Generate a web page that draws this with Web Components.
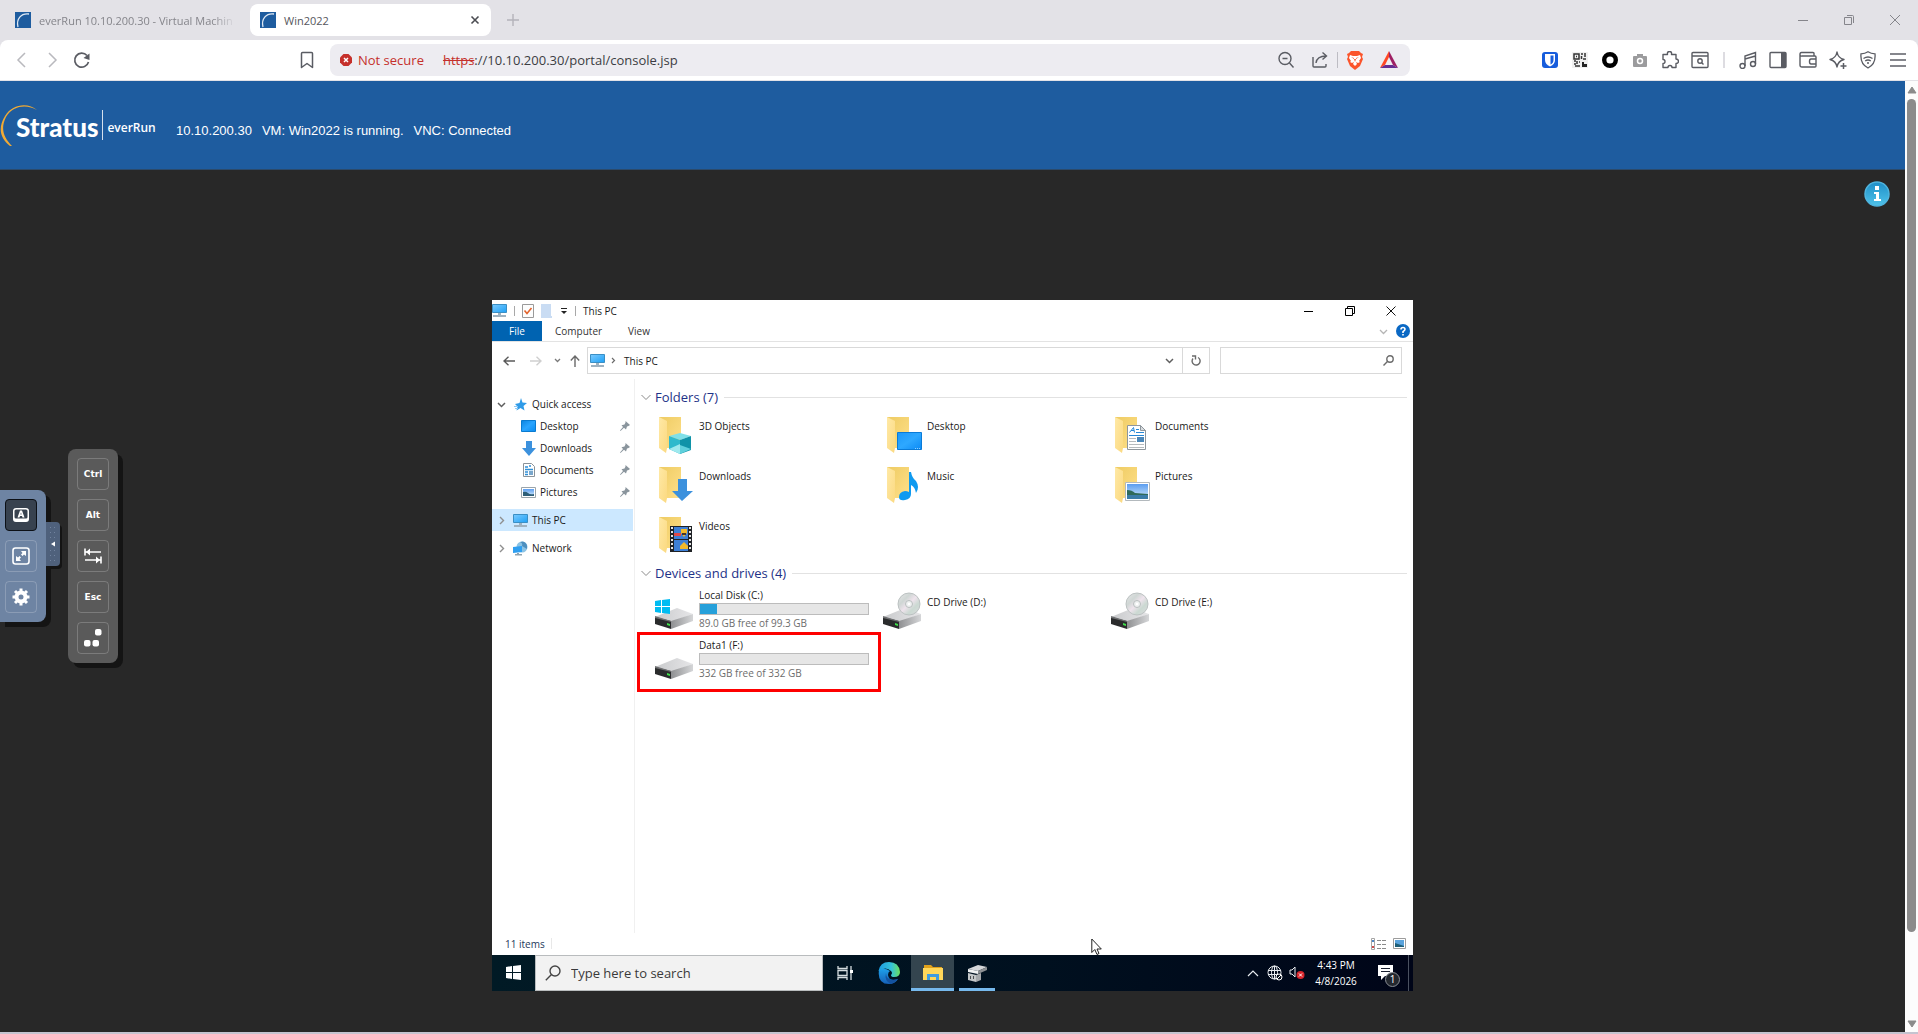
<!DOCTYPE html>
<html lang="en">
<head>
<meta charset="utf-8">
<title>Win2022</title>
<style>
  body {
    margin: 0;
    min-height: 100vh;
    display: flex;
    flex-direction: column;
    background: #282828;
    font-family: "Open Sans", "Noto Sans", sans-serif;
    font-size: 10px;
  }
  .viewport {
    flex: 1;
    display: flex;
    border-bottom: 2px solid #c5c4d0;
  }
  .page {
    flex: 1;
    display: flex;
    flex-direction: column;
    min-width: 0;
  }
</style>
</head>
<body>
<browser-chrome>
  <browser-tab slot="tabs" label="everRun 10.10.200.30 - Virtual Machin"></browser-tab>
  <browser-tab slot="tabs" label="Win2022" active></browser-tab>
</browser-chrome>
<div class="viewport">
  <div class="page">
    <console-header>
      <span>10.10.200.30</span>
      <span>VM: Win2022 is running.</span>
      <span>VNC: Connected</span>
    </console-header>
    <console-workspace>
      <remote-screen>
        <explorer-window>
          <nav-item slot="nav" icon="star" open>Quick access</nav-item>
          <nav-item slot="nav" icon="desktop" child>Desktop</nav-item>
          <nav-item slot="nav" icon="download" child>Downloads</nav-item>
          <nav-item slot="nav" icon="document" child>Documents</nav-item>
          <nav-item slot="nav" icon="picture" child>Pictures</nav-item>
          <nav-item slot="nav" icon="pc" selected spaced>This PC</nav-item>
          <nav-item slot="nav" icon="network" spaced>Network</nav-item>

          <item-group label="Folders (7)">
            <item-tile icon="folder3d">3D Objects</item-tile>
            <item-tile icon="folderDesktop">Desktop</item-tile>
            <item-tile icon="folderDocs">Documents</item-tile>
            <item-tile icon="folderDown">Downloads</item-tile>
            <item-tile icon="folderMusic">Music</item-tile>
            <item-tile icon="folderPics">Pictures</item-tile>
            <item-tile icon="folderVideo">Videos</item-tile>
          </item-group>
          <item-group label="Devices and drives (4)">
            <item-tile icon="driveWin" used="10" free="89.0 GB free of 99.3 GB">Local Disk (C:)</item-tile>
            <item-tile icon="driveCd">CD Drive (D:)</item-tile>
            <item-tile icon="driveCd">CD Drive (E:)</item-tile>
            <item-tile icon="drive" used="0" free="332 GB free of 332 GB" marked>Data1 (F:)</item-tile>
          </item-group>
        </explorer-window>
        <task-bar></task-bar>
      </remote-screen>
    </console-workspace>
  </div>
  <page-scrollbar></page-scrollbar>
</div>

<script>
// ---- icons: name -> [width, height, svg content] ----
const folder = `
  <linearGradient id="fb" x1="0" y1="0" x2="1" y2="1"><stop offset="0" stop-color="#eecb62"/><stop offset="1" stop-color="#ffe08a"/></linearGradient>
  <linearGradient id="ff" x1="0" y1="0" x2="1" y2="1"><stop offset="0" stop-color="#ffe9a6"/><stop offset="1" stop-color="#fbd980"/></linearGradient>
  <path fill="url(#fb)" d="M4 1h22v31H8z"/>
  <path fill="url(#ff)" d="M4 1l8 4v27l-1 5-7-5z"/>`;
const box = `
  <linearGradient id="dt" x1="0" y1="0" x2="1" y2="0"><stop offset="0" stop-color="#c9cacc"/><stop offset="1" stop-color="#e6e6e8"/></linearGradient>
  <linearGradient id="ds" x1="0" y1="0" x2="1" y2="0"><stop offset="0" stop-color="#8f9092"/><stop offset="1" stop-color="#d5d6d8"/></linearGradient>
  <path fill="url(#dt)" d="M0 25l22-9 16 6-22 8z"/>
  <path fill="url(#ds)" d="M16 29l22-7v7l-22 8z"/>
  <path fill="#2a2b2c" d="M0 25l16 4v8L0 32z"/>
  <path fill="#6d6e70" d="M0 24l16 5v1L0 26z"/>
  <path fill="#3fe04a" d="M12 31l3 1v2l-3-1z"/>`;
const monitor = `
  <linearGradient id="mo" x1="0" y1="0" x2="1" y2="1"><stop offset="0" stop-color="#7ccbff"/><stop offset="1" stop-color="#1ea0f5"/></linearGradient>
  <path fill="url(#mo)" stroke="#3b8fc4" d="M.5 1.5h14v8H.5z"/>
  <path fill="#9fb2c0" d="M6 10h3v2H6zM1 12h13v2H1z"/>`;
const sky = `
  <linearGradient id="sk" x1="0" y1="0" x2="0" y2="1"><stop offset="0" stop-color="#5b9df0"/><stop offset="1" stop-color="#d5ecfb"/></linearGradient>`;

const ICONS = {
  favicon: [16, 16, `<path fill="#1e5c9f" d="M0 0h16v16H0z"/><path fill="none" stroke="#dfe9f4" stroke-width="1.3" d="M14 2C6 1 1 7 3 15"/>`],
  close: [10, 10, `<path stroke="#4b4c52" stroke-width="1.6" d="M1.5 1.5l7 7m0-7l-7 7"/>`],
  plus: [12, 12, `<path stroke="#b4b3ba" stroke-width="1.4" d="M6 0v12M0 6h12"/>`],
  winMin: [12, 12, `<path stroke="#85858b" d="M1 6.5h10"/>`],
  winMax: [12, 12, `<path fill="none" stroke="#85858b" d="M1.500 3.500h7v7h-7zM4 1.500h5.500q1 0 1 1V9"/>`],
  winClose: [12, 12, `<path stroke="#85858b" d="M1 1l10 10M11 1L1 11"/>`],
  back: [12, 16, `<path fill="none" stroke="#b9b9be" stroke-width="1.5" d="M9 1L2 8l7 7"/>`],
  forward: [12, 16, `<path fill="none" stroke="#b9b9be" stroke-width="1.5" d="M3 1l7 7-7 7"/>`],
  reload: [18, 18, `<path fill="none" stroke="#5a5c63" stroke-width="1.7" d="M15.500 11A7 7 0 1 1 14 4.500"/><path fill="#5a5c63" d="M16.500 2.500V9l-6-2z"/>`],
  bookmark: [14, 18, `<path fill="none" stroke="#5a5c63" stroke-width="1.5" stroke-linejoin="round" d="M1.500 2.500q0-1 1-1h9q1 0 1 1v14L7 12.500l-5.500 4z"/>`],
  notSecure: [12, 12, `<path fill="#c5302b" d="M3.500 0h5L12 3.500v5L8.500 12h-5L0 8.500v-5z"/><path stroke="#fff" stroke-width="1.5" d="M4 4l4 4m0-4L4 8"/>`],
  zoomOut: [18, 18, `<g fill="none" stroke="#5a5c63" stroke-width="1.4"><circle cx="8" cy="7.5" r="6"/><path d="M12.500 12l4 4.500M5.500 7.500h5"/></g>`],
  share: [18, 18, `<path fill="none" stroke="#5a5c63" stroke-width="1.4" d="M2 6v9q0 1 1 1h11q1 0 1-1v-2M5 12q1-7 10-7M11.500 1.500L15.500 5l-4 3.500"/>`],
  brave: [18, 20, `<path fill="#fb542b" d="M5 1h8l2 2 2 1-1 3 1 2-3 7-5 4-5-4-3-7 1-2-1-3 2-1z"/><path fill="#fff" d="M4 5l3 1h4l3-1 1 3-2 3 1 1-2 1-2-1 1 2-2 2-2-2 1-2-2 1-2-1 1-1-2-3z"/><path fill="#fb542b" d="M5 7l3 1v1zM13 7l-3 1v1zM8 9h2l-1 3z"/>`],
  bat: [18, 18, `<path fill="#ff4724" d="M9 0L0 17l5-3 4-8z"/><path fill="#9e1f63" d="M9 0l9 17-5-3-4-8z"/><path fill="#662d91" d="M0 17h18l-5-3H5z"/>`],
  bitwarden: [16, 16, `<rect width="16" height="16" rx="3" fill="#175ddc"/><path fill="#fff" d="M3 2h10v6q0 4-5 6.500Q3 12 3 8z"/><path fill="#175ddc" d="M8.500 3.500h3V8q0 3-3 4.500z"/>`],
  qr: [16, 16, `<path fill="#f0f0f0" d="M0 0h16v16H0z"/><path fill="none" stroke="#333" stroke-width="1.5" d="M2 2h5v5H2zM4 4.500h1M9 2h2M13 1v4M9.500 4v3M11 7h3M2 9h2M5 9v3M2 12h2M3 14h3M7 10h1M7 13v2"/><path fill="#222" d="M10 10h2v2h3v3h-5z"/>`],
  ring: [16, 16, `<circle cx="8" cy="8" r="5.8" fill="#fff" stroke="#000" stroke-width="4.4"/>`],
  camera: [16, 16, `<path fill="#9b9b9d" d="M5 2h6v2h3q1 0 1 1v9q0 1-1 1H2q-1 0-1-1V5q0-1 1-1h3z"/><circle cx="8" cy="9" r="2.5" fill="#9b9b9d" stroke="#fff" stroke-width="1.5"/>`],
  puzzle: [18, 18, `<path fill="none" stroke="#5a5c63" stroke-width="1.4" stroke-linejoin="round" d="M2 3.500h4.500q-.5-3 2-3t2 3H15V8q2.500 0 2.500 2.200T15 12.500v4H11q0-2-2-2t-2 2H2v-4q2 0 2-2t-2-2z"/>`],
  searchTab: [18, 18, `<g fill="none" stroke="#5a5c63" stroke-width="1.4"><rect x="1" y="1.5" width="16" height="15" rx="1"/><path d="M1 5h16M10.500 11.500l2 2"/><circle cx="9" cy="10" r="2.2"/></g>`],
  music: [18, 18, `<g fill="none" stroke="#5a5c63" stroke-width="1.4"><circle cx="3.5" cy="15" r="2.5"/><circle cx="14" cy="13" r="2.5"/><path d="M6 15V5l10.500-3.500V13M6 8l10.500-3"/></g>`],
  panel: [18, 18, `<rect x="1" y="1.5" width="16" height="15" rx="1" fill="none" stroke="#5a5c63" stroke-width="1.4"/><path fill="#5a5c63" d="M12 2h5v14h-5z"/>`],
  wallet: [18, 18, `<g fill="none" stroke="#5a5c63" stroke-width="1.4"><path d="M15 5V2.500q0-1-1-1H2.500q-1.500 0-1.500 2T3 5h13q1 0 1 1v9q0 1-1 1H3q-2 0-2-2V3"/><path d="M17 8h-5q-1.500 0-1.500 2.500T12 13h5"/></g>`],
  sparkle: [18, 18, `<path fill="none" stroke="#5a5c63" stroke-width="1.4" stroke-linejoin="round" d="M8 1q1 6 7 7.500Q9 10 8 16 7 10 1 8.500 7 7 8 1z"/><path stroke="#5a5c63" stroke-width="1.5" d="M14.500 12v6M11.500 15h6"/>`],
  shield: [16, 18, `<g fill="none" stroke="#5a5c63" stroke-width="1.3"><path d="M8 .8q3 2 7 2Q16 13 8 17 0 13 1 2.800q4 0 7-2z"/><path d="M3.500 7.500q4.500-3 9 0M5.200 10q2.800-2 5.600 0"/></g><circle cx="8" cy="12" r="1" fill="#5a5c63"/>`],
  menu: [18, 16, `<path stroke="#85868c" stroke-width="2" d="M1 2h16M1 8h16M1 14h16"/>`],
  up: [10, 8, `<path fill="#8b8b8b" stroke="#8b8b8b" stroke-linejoin="round" d="M5 1l4 6H1z"/>`],
  down: [10, 8, `<path fill="#8b8b8b" stroke="#8b8b8b" stroke-linejoin="round" d="M5 7l4-6H1z"/>`],

  swoosh: [40, 44, `<path fill="#f0aa35" d="M37 7C28-1 12 1 5 13-3 26 1 36 10 43L12 43C4 35 0 26 6 14 13 2 27 1 37 7z"/>`],
  info: [26, 26, `<linearGradient id="in" x1="0" y1="0" x2="0" y2="1"><stop offset="0" stop-color="#1f8fc8"/><stop offset="1" stop-color="#4fc3ea"/></linearGradient><circle cx="13" cy="13" r="12" fill="url(#in)" stroke="#4fb4de" stroke-width="1.5"/><path fill="#fff" d="M11 5h4v4h-4zM10 11h5v7h2v2h-7v-2h2v-5h-2z"/>`],
  vncA: [16, 16, `<path fill="#fff" fill-rule="evenodd" d="M3 1h10q3 0 3 3v8q0 3-3 3H3q-3 0-3-3V4q0-3 3-3zm0 1.500Q1.500 2.500 1.500 4v6q0 1.500 1.500 1.500h10q1.500 0 1.500-1.500V4q0-1.500-1.500-1.500zM7 3.500h2l2.500 7h-2L9 9H7l-.5 1.500h-2zM8 5.500L7.400 7.500h1.200z"/>`],
  vncFull: [18, 18, `<rect x="1" y="1" width="16" height="16" rx="2.5" fill="none" stroke="#fff" stroke-width="1.6"/><path fill="#fff" d="M9 4h5v5l-2-1.500-1.500 1.500L9 7.500 10.500 6zM4 9l2 1.500L7.500 9 9 10.500 7.500 12 9 14H4z"/>`],
  gear: [18, 18, `<circle cx="9" cy="9" r="4.5" fill="none" stroke="#fff" stroke-width="4"/><path stroke="#fff" stroke-width="3" d="M9 .5v3M9 14.500v3M.5 9h3M14.500 9h3M3 3l2 2M13 13l2 2M3 15l2-2M13 5l2-2"/>`],
  tabKey: [18, 16, `<path stroke="#fff" stroke-width="1.6" d="M1 .5v7M1 4h16M17 8.500v7M1 12h16"/><path fill="#fff" d="M2 4l4-3.500v7zM16 12l-4-3.500v7z"/>`],
  dots: [18, 18, `<g fill="#fff"><rect x="11" width="6.5" height="6.5" rx="2"/><rect y="11" width="6.5" height="6.5" rx="2"/><rect x="8.5" y="11" width="6.5" height="6.5" rx="2"/></g>`],
  grip: [8, 36, `<g fill="#71839f"><path d="M1 1h1v1H1zM5 1h1v1H5zM1 6h1v1H1zM5 6h1v1H5zM1 11h1v1H1zM5 11h1v1H5zM1 24h1v1H1zM5 24h1v1H5zM1 29h1v1H1zM5 29h1v1H5zM1 34h1v1H1zM5 34h1v1H5z"/></g><path fill="#fff" d="M2 18l4-2.500v5z"/>`],

  pc: [15, 15, monitor],
  props: [12, 15, `<path fill="#fdfdfd" stroke="#9a9a9a" d="M.5 1.500h11v13H.5z"/><path fill="none" stroke="#e2642d" stroke-width="1.6" d="M2.500 7.500l2.500 3 4.500-5.500"/>`],
  newFolder: [12, 14, `<path fill="#c9dcf3" d="M0 0h10v12h1v2H0z"/>`],
  custom: [8, 8, `<path stroke="#222" d="M1 1.500h6"/><path fill="#222" d="M1 4h6L4 7z"/>`],
  exMin: [10, 10, `<path stroke="#000" d="M0 5.500h9"/>`],
  exMax: [10, 10, `<path fill="none" stroke="#000" d="M.5 2.500h7v7h-7zM2.500 2V.5h7v7H8"/>`],
  exClose: [10, 10, `<path stroke="#111" d="M.5.5l9 9m0-9l-9 9"/>`],
  help: [14, 14, `<circle cx="7" cy="7" r="7" fill="#0a68c4"/><path fill="none" stroke="#fff" stroke-width="1.6" d="M5 5.500Q5 3.500 7 3.500t2 1.700Q9 6.200 7 7.700V9M7 10v1.600"/>`],
  chevDown: [9, 9, `<path fill="none" stroke="#5f5f5f" stroke-width="1.5" d="M1 3l3.500 3.500L8 3"/>`],
  chevSoft: [9, 9, `<path fill="none" stroke="#b5b5b5" stroke-width="1.3" d="M1 3l3.500 3.500L8 3"/>`],
  chevWide: [10, 9, `<path fill="none" stroke="#8a8a8a" d="M.5 2L5 6.500 9.500 2"/>`],
  chevSmall: [7, 7, `<path fill="none" stroke="#7a7a7a" stroke-width="1.3" d="M1 2l2.500 2.500L6 2"/>`],
  chevRight: [9, 9, `<path fill="none" stroke="#8f8f8f" stroke-width="1.4" d="M3 1l3.500 3.500L3 8"/>`],
  crumb: [7, 7, `<path fill="none" stroke="#6b6b6b" stroke-width="1.2" d="M2 1l2.500 2.500L2 6"/>`],
  exBack: [12, 10, `<path fill="none" stroke="#5a5a5a" stroke-width="1.4" d="M12 5H1M5.500.8L1 5l4.500 4.200"/>`],
  exFwd: [12, 10, `<path fill="none" stroke="#cfcfcf" stroke-width="1.4" d="M0 5h11M6.500.8L11 5 6.500 9.200"/>`],
  exUp: [10, 12, `<path fill="none" stroke="#6a6a6a" stroke-width="1.4" d="M5 12V1M.8 5.500L5 1l4.200 4.500"/>`],
  exReload: [10, 11, `<path fill="none" stroke="#6b6b6b" stroke-width="1.4" d="M7 2.500A4 4 0 1 1 2 3.500M1 1h3.500v3.500"/>`],
  exSearch: [11, 11, `<g fill="none" stroke="#6b6b6b" stroke-width="1.4"><circle cx="7" cy="4" r="3.2"/><path d="M4.700 6.300L.5 10.500"/></g>`],
  star: [13, 13, `<path fill="#2f9be8" d="M7 0l1.500 4.500L13 5 9.500 8l1 4.500L6.500 10l-4 2.500 1-4L1 6l4.500-1z"/><path stroke="#8fc9f5" d="M0 8.500h4M1 10.500h3"/>`],
  desktop: [15, 12, `<linearGradient id="de" x1="0" y1="0" x2="1" y2="1"><stop offset="0" stop-color="#0a84e0"/><stop offset=".5" stop-color="#2aa5ff"/><stop offset="1" stop-color="#0a8cf0"/></linearGradient><path fill="url(#de)" stroke="#0a7bd0" d="M.5.5h14v11H.5z"/>`],
  download: [14, 15, `<path fill="#3c91dd" d="M4 0h6v7h4l-7 8-7-8h4z"/>`],
  document: [12, 14, `<path fill="#fff" stroke="#8a9299" d="M.5.5h8l3 3v10H.5z"/><path stroke="#2f8fd6" stroke-width="1.4" d="M2 4h3M6 3h2M2 6.500h8M2 9h3M2 11.500h3"/><path fill="#7aa7cc" d="M6 8h4v4H6z"/>`],
  picture: [15, 11, `${sky}<path fill="#fff" stroke="#9aa4ab" d="M.5.5h14v10H.5z"/><path fill="url(#sk)" d="M2 2h11v7H2z"/><path fill="#2f5f78" d="M2 5q3-1 5 1t6 1v2H2z"/>`],
  network: [15, 15, `<circle cx="9" cy="6" r="5.5" fill="#8cc3e4"/><path fill="#4d8fbf" d="M7 1q3 1 2 4l5 3q1-6-4-7.500z"/><path fill="#2f9ff0" d="M0 6l9-1v6l-9 1z"/><path fill="#8fa3b0" d="M4 12h2v1h3v1.500H2V13h2z"/>`],
  pin: [10, 10, `<path fill="#8a959d" d="M5.500 0L10 4 8.500 5 7 5.500 6 8.500 4 6.800.5 10 0 9.500 3 6 1.500 4.200 4.500 3.500 5.500 1.500z"/>`],
  folder3d: [40, 40, `${folder}<path fill="#7fe0e8" d="M14 20l11-3 11 3-11 4z"/><path fill="#2fb9cc" d="M14 20l11 4v14l-11-5z"/><path fill="#9fe9ee" d="M14 33l11-5v10z"/><path fill="#0f93a8" d="M36 20l-11 4v14l11-4z"/><path fill="#5fd0dc" d="M36 33l-11-4v9z"/>`],
  folderDesktop: [40, 40, `${folder}<linearGradient id="g" x1="0" y1="0" x2="1" y2="1"><stop offset="0" stop-color="#1b97fa"/><stop offset=".5" stop-color="#2ea8ff"/><stop offset="1" stop-color="#0b8af5"/></linearGradient><path fill="url(#g)" stroke="#0a7bd8" d="M14.500 16.500h24v17h-24z"/><path stroke="#8fd0ff" d="M32 32.500h5" stroke-dasharray="1 1"/>`],
  folderDocs: [40, 40, `${folder}<path fill="#fff" stroke="#8e969c" d="M16.500 9.500h13l5 5v19h-18z"/><path fill="#d8dcdf" stroke="#8e969c" d="M29.500 9.500v5h5z"/><path fill="none" stroke="#2788d6" d="M18.500 16.500l4-5 1 5M20 14.500h3M25 13.500h3M25 16.500h8M18 19.500h15"/><path stroke="#b5babd" d="M18 22.500h7M18 25.500h7M18 28.500h15M18 31.500h15"/><path fill="#4a86b8" d="M26 21h7v5h-7z"/>`],
  folderDown: [40, 40, `${folder}<path fill="#3c91dd" d="M23 13h9v12h6L27 35 17 25h6z"/>`],
  folderMusic: [40, 40, `${folder}<path fill="#0f9af0" d="M26 6h2q1 6 5 9 4 6 0 12-1-6-5-8v9q0 5-6 6t-6-3q0-5 6-6 2 0 4 1z"/>`],
  folderPics: [40, 40, `${folder}${sky}<path fill="#fff" stroke="#b3b9bd" d="M14.500 16.500h24v18h-24z"/><path fill="url(#sk)" d="M16 18h21v15H16z"/><path fill="#2f6a5a" d="M16 24q5 0 8 3l13 1v2H16z"/><path fill="#3a7ca8" d="M16 29h21v4H16z"/>`],
  folderVideo: [40, 40, `${folder}<path fill="#1f2226" d="M15 10h22v26H15z"/><path stroke="#e6e6e6" stroke-width="2" stroke-dasharray="2 2" d="M17 11v24M35 11v24"/><path fill="#3d7fd6" d="M19 11h14v12H19zM19 24h14v11H19z"/><path fill="#e04848" d="M19 17h7v3h-7z"/><path fill="#f2b92b" d="M26 13h6v4l-3 4-3-4zM25 30l4-4 4 4v3h-8z"/><path fill="#46352a" d="M27 17h4v2h-4z"/>`],
  drive: [40, 40, box],
  driveWin: [40, 40, `${box}<path fill="#00bcf2" d="M0 9l6-1v6H0zM7 8l8-1v7H7zM0 15h6v6l-6-1zM7 15h8v7l-8-1z"/>`],
  driveCd: [40, 40, `${box}<linearGradient id="cd" x1="0" y1="0" x2="1" y2="1"><stop offset="0" stop-color="#e9e9e9"/><stop offset=".3" stop-color="#cfd6d4"/><stop offset=".5" stop-color="#eee3ec"/><stop offset=".7" stop-color="#cbd9d2"/><stop offset="1" stop-color="#dcdcde"/></linearGradient><circle cx="26" cy="12" r="11" fill="url(#cd)" stroke="#bcc2c2"/><circle cx="26" cy="12" r="3.5" fill="#eef0f0" stroke="#b9bfbf"/><circle cx="26" cy="12" r="1.3" fill="#fff"/>`],
  viewList: [16, 12, `<path fill="none" stroke="#a5a5a5" d="M.5.5h3v11h-3z"/><path fill="#4d86c6" d="M1 2h2v2H1z"/><path fill="#d04a4a" d="M1 8h2v2H1z"/><path stroke="#8a8a8a" stroke-dasharray="4 1" d="M6 2.500h9M6 6.500h9M6 10.500h9"/>`],
  viewTiles: [13, 11, `<path fill="#fff" stroke="#9c9c9c" d="M.5.5h12v10H.5z"/><path fill="#5aa3dc" d="M2 2h9v7H2z"/><path fill="#1f5f78" d="M2 5l9 3v1H2z"/>`],

  windows: [15, 15, `<path fill="#fff" d="M0 2l6-1v6H0zM7 1l8-1v7H7zM0 8h6v6l-6-1zM7 8h8v7l-8-1z"/>`],
  taskSearch: [16, 16, `<g fill="none" stroke="#444" stroke-width="1.4"><circle cx="10" cy="6" r="5"/><path d="M6.500 9.500L.8 15.200"/></g>`],
  taskView: [16, 14, `<g fill="none" stroke="#d6dde0" stroke-width="1.3"><path d="M1 0v2.500h9V0M1 14v-2.500h9V14M1 4.500h9v5H1zM14 0v14"/></g><path fill="#fff" d="M13 4h3v3h-3z"/>`],
  edge: [22, 22, `<linearGradient id="e1" x1="0" y1="0" x2="1" y2="0"><stop offset="0" stop-color="#1b9de2"/><stop offset=".6" stop-color="#35c1d8"/><stop offset="1" stop-color="#6be05a"/></linearGradient><linearGradient id="e2" x1="0" y1="0" x2="0" y2="1"><stop offset="0" stop-color="#1ea0ea"/><stop offset="1" stop-color="#1560b8"/></linearGradient><path fill="url(#e2)" d="M1 8Q-1 22 11 22q6 0 9-5-9 3-10-4 0-3 2-4Q6 5 1 8z"/><path fill="url(#e1)" d="M.5 9Q2 0 11 0q10 0 11 10 0 5-6 5-3 0-3-2 2-2 0-4Q8 4 .5 9z"/><path fill="#14529f" d="M8 11q0 9 12 6-3 4-7 5-7-3-5-11z"/>`],
  explorer: [20, 18, `<path fill="#e0a11b" d="M1 1h7l2 2h9v4H1z"/><path fill="#ffd75a" d="M0 4h20v12H0z"/><path fill="#3f9ce0" d="M4 16v-6h12v6h-3v-3H7v3z"/>`],
  server: [20, 18, `<path fill="#d5d7d9" d="M1 5l10-4 9 2-9 4z"/><path fill="#8d9093" d="M11 7l9-4v3l-9 4z"/><path fill="#f0f1f2" d="M1 5l10 2v3L1 8z"/><path fill="#c3c6c8" d="M1 9l8 2v7l-8-2z"/><path fill="#a5a8ab" d="M9 11l5-2v7l-5 2z"/><path fill="#4b4e51" d="M3 12h1v3H3zM6 12h1v3H6z"/>`],
  trayUp: [12, 8, `<path fill="none" stroke="#e8ecf0" stroke-width="1.2" d="M1 7l5-5 5 5"/>`],
  globe: [16, 16, `<g fill="none" stroke="#e8ecf0"><circle cx="7.5" cy="7.5" r="6.5"/><ellipse cx="7.5" cy="7.5" rx="3" ry="6.5"/><path d="M1 5.500h13M1 9.500h13M7.500 1v13"/></g><circle cx="12" cy="12" r="3" fill="#050d1b" stroke="#fff"/><path stroke="#fff" d="M10 14l4-4"/>`],
  mute: [16, 14, `<path fill="none" stroke="#e8ecf0" d="M1 4h2l3-3v10L3 8H1z"/><circle cx="11.5" cy="9" r="4" fill="#d9262c"/><path stroke="#fff" d="M10 7.500l3 3m0-3l-3 3"/>`],
  notify: [16, 15, `<path fill="#fff" d="M0 0h15v11H7l-4 4v-4H0z"/><path stroke="#1a2030" d="M3 3.500h9M3 6.500h9"/>`],
  cursor: [12, 18, `<path fill="#fff" stroke="#222" d="M.8 1v13.500l3-3 2.200 5 2-1-2-4.500h4.300z"/>`]
};

class UiIcon extends HTMLElement {
  connectedCallback() {
    if (this.shadowRoot) return;
    const [w, h, body] = ICONS[this.getAttribute('name')];
    this.attachShadow({ mode: 'open' }).innerHTML = `
      <style>
        :host { display: block; flex: none; }
        svg { display: block; }
      </style>
      <svg width="${w}" height="${h}" viewBox="0 0 ${w} ${h}" aria-hidden="true">${body}</svg>`;
  }
}
customElements.define('ui-icon', UiIcon);

// shared reset for the buttons inside every shadow root
const RESET = `
  * { box-sizing: border-box; }
  button, input {
    margin: 0; padding: 0; border: 0; background: none;
    font: inherit; color: inherit; outline: none;
  }
  button { display: flex; align-items: center; justify-content: center; flex: none; }
`;

function define(name, render) {
  customElements.define(name, class extends HTMLElement {
    connectedCallback() {
      if (this.shadowRoot) return;
      this.attachShadow({ mode: 'open' }).innerHTML = render(this);
    }
  });
}

const iconButton = (icon, label) =>
  `<button type="button" aria-label="${label}"><ui-icon name="${icon}"></ui-icon></button>`;

define('browser-tab', el => `
  <style>
    ${RESET}
    :host {
      display: flex; align-items: center; gap: 8px;
      width: 241px; height: 32px; padding: 0 10px; box-sizing: border-box;
      border-radius: 8px; font-size: 11px; color: #85858b;
    }
    :host([active]) { background: #fff; color: #55565c; }
    span { flex: 1; white-space: nowrap; }
    :host(:not([active])) span {
      -webkit-mask-image: linear-gradient(to right, #000 88%, transparent);
    }
    button { width: 12px; height: 20px; }
  </style>
  <ui-icon name="favicon"></ui-icon>
  <span>${el.getAttribute('label')}</span>
  ${el.hasAttribute('active') ? iconButton('close', 'Close tab') : ''}
`);

define('browser-chrome', () => `
  <style>
    ${RESET}
    :host { display: block; background: #e3e2e7; border-bottom: 1px solid #e3e2e7; }
    .tabs { display: flex; align-items: center; height: 40px; padding-left: 5px; gap: 4px; }
    .tabs > button { width: 36px; height: 32px; }
    .controls { margin-left: auto; display: flex; }
    .controls button { width: 46px; height: 32px; }
    .bar {
      display: flex; align-items: center; height: 40px; padding: 0 5px 0 7px;
      background: #fff; border-radius: 8px 8px 0 0;
    }
    .bar > button { width: 30px; height: 32px; }
    .bookmark { width: 233px; padding-right: 16px; display: flex; justify-content: flex-end; }
    .url {
      flex: 1; max-width: 1080px; height: 32px; padding: 0 4px 0 10px; display: flex; align-items: center;
      background: #edecf1; border-radius: 8px; font-size: 13px; color: #3c3d43;
    }
    .warn { color: #c5302b; margin: 0 19px 0 6px; }
    s { color: #c5302b; }
    input { flex: 1; min-width: 0; height: 24px; }
    .url button { height: 32px; width: 34px; }
    .url i { width: 1px; height: 16px; background: #bdbcc3; }
    .extensions { margin-left: auto; display: flex; align-items: center; }
    .extensions button { width: 30px; height: 32px; }
    .extensions i { width: 2px; height: 16px; margin: 0 8px; background: #dddce1; }
  </style>
  <div class="tabs">
    <slot name="tabs"></slot>
    ${iconButton('plus', 'New tab')}
    <div class="controls">
      ${iconButton('winMin', 'Minimize')}
      ${iconButton('winMax', 'Restore')}
      ${iconButton('winClose', 'Close')}
    </div>
  </div>
  <div class="bar">
    ${iconButton('back', 'Back')}
    ${iconButton('forward', 'Forward')}
    ${iconButton('reload', 'Reload')}
    <div class="bookmark">${iconButton('bookmark', 'Bookmark')}</div>
    <div class="url">
      <ui-icon name="notSecure"></ui-icon>
      <span class="warn">Not secure</span>
      <s>https</s><input aria-label="Address" value="://10.10.200.30/portal/console.jsp">
      ${iconButton('zoomOut', 'Zoom')}
      ${iconButton('share', 'Share')}
      <i></i>
      ${iconButton('brave', 'Shields')}
      ${iconButton('bat', 'Rewards')}
    </div>
    <div class="extensions">
      ${iconButton('bitwarden', 'Bitwarden')}
      ${iconButton('qr', 'QR code')}
      ${iconButton('ring', 'Recorder')}
      ${iconButton('camera', 'Screenshot')}
      ${iconButton('puzzle', 'Extensions')}
      ${iconButton('searchTab', 'Search tabs')}
      <i></i>
      ${iconButton('music', 'Media')}
      ${iconButton('panel', 'Side panel')}
      ${iconButton('wallet', 'Wallet')}
      ${iconButton('sparkle', 'Leo')}
      ${iconButton('shield', 'VPN')}
      ${iconButton('menu', 'Menu')}
    </div>
  </div>
`);

define('page-scrollbar', () => `
  <style>
    ${RESET}
    :host {
      display: flex; flex-direction: column; align-items: center; gap: 3px;
      width: 13px; padding: 2px 0; box-sizing: border-box; background: #fcfcfc;
    }
    button { width: 13px; height: 13px; }
    .track { flex: 1; width: 9px; }
    .thumb { height: 91%; border-radius: 5px; background: #8b8b8b; }
  </style>
  ${iconButton('up', 'Scroll up')}
  <div class="track"><div class="thumb"></div></div>
  ${iconButton('down', 'Scroll down')}
`);

define('console-header', () => `
  <style>
    :host {
      display: flex; align-items: center; height: 89px;
      background: #1e5c9f; color: #fff; border-bottom: 1px solid #2b4a6b; box-sizing: border-box;
    }
    .logo { display: flex; align-items: center; width: 176px; }
    .swoosh { margin-right: -24px; }
    b { padding-top: 4px; font: 900 26px/30px Lato, sans-serif; }
    .product {
      margin: 0 0 0 4px; padding: 6px 0 0 4px; border-left: 1px solid #d5e0ec;
      font: 600 12px/24px "Open Sans", sans-serif;
    }
    .status { display: flex; gap: 10px; padding-top: 11px; font: 13px/16px "Liberation Sans", Arial, sans-serif; }
  </style>
  <div class="logo">
    <ui-icon class="swoosh" name="swoosh"></ui-icon>
    <b>Stratus</b><span class="product">everRun</span>
  </div>
  <div class="status"><slot></slot></div>
`);

define('key-button', el => `
  <style>
    ${RESET}
    :host { display: block; }
    button {
      width: 32px; height: 32px; border: 1px solid rgba(255, 255, 255, .2); border-radius: 4px;
      color: #fff; font: bold 9px/12px "DejaVu Sans", sans-serif;
    }
    :host([pressed]) button { background: #38424f; border-color: #0c1016; }
  </style>
  <button type="button" aria-label="${el.getAttribute('label')}"><slot></slot></button>
`);

define('control-bar', () => `
  <style>
    ${RESET}
    :host { display: flex; align-items: center; }
    .panel, .keys {
      display: flex; flex-direction: column; gap: 9px; padding: 9px;
      box-shadow: 5px 5px 0 #141414;
    }
    .panel { padding-left: 5px; background: #6e84a3; border-radius: 0 8px 8px 0; }
    .handle {
      z-index: 1; align-self: flex-start; margin-top: 73px;
      width: 14px; height: 44px; background: #4f617c; border-radius: 0 4px 4px 0; box-shadow: 2px 3px 0 #141414;
    }
    .keys { margin-left: 8px; background: #5a5a5a; border-radius: 8px; }
  </style>
  <div class="panel">
    <key-button label="Extra keys" pressed><ui-icon name="vncA"></ui-icon></key-button>
    <key-button label="Full screen"><ui-icon name="vncFull"></ui-icon></key-button>
    <key-button label="Settings"><ui-icon name="gear"></ui-icon></key-button>
  </div>
  <button class="handle" type="button" aria-label="Hide bar"><ui-icon name="grip"></ui-icon></button>
  <div class="keys">
    <key-button label="Ctrl">Ctrl</key-button>
    <key-button label="Alt">Alt</key-button>
    <key-button label="Tab"><ui-icon name="tabKey"></ui-icon></key-button>
    <key-button label="Esc">Esc</key-button>
    <key-button label="Ctrl Alt Del"><ui-icon name="dots"></ui-icon></key-button>
  </div>
`);

define('console-workspace', () => `
  <style>
    ${RESET}
    :host { flex: 1; display: block; position: relative; padding: 130px 0 39px; background: #282828; }
    control-bar { position: absolute; left: 0; top: 279px; }
    .info { position: absolute; right: 15px; top: 11px; }
  </style>
  <slot></slot>
  <control-bar></control-bar>
  <button class="info" type="button" aria-label="Info"><ui-icon name="info"></ui-icon></button>
`);

define('remote-screen', () => `
  <style>
    :host {
      position: relative; display: flex; flex-direction: column;
      width: 100%; max-width: 921px; aspect-ratio: 4 / 3; margin: 0 auto; background: #fff;
    }
    .cursor { position: absolute; left: 599px; top: 638px; }
  </style>
  <slot></slot>
  <ui-icon class="cursor" name="cursor"></ui-icon>
`);

define('explorer-window', () => `
  <style>
    ${RESET}
    :host { flex: 1; display: flex; flex-direction: column; color: #1a1a1a; background: #fff; }
    .title, .tabs, .nav, .address, .search, .status { display: flex; align-items: center; }
    .title { height: 21px; gap: 7px; }
    .title i { width: 1px; height: 10px; background: #a8a8a8; }
    .window { display: flex; margin-left: auto; padding-right: 2px; }
    .window button { width: 41px; height: 20px; }
    .tabs { height: 21px; border-bottom: 1px solid #e3e3e3; padding-right: 3px; }
    .tabs button { height: 20px; color: #333; }
    .tabs .file { width: 50px; background: #0063b1; color: #fff; }
    .tabs .tab { padding: 0 13px; }
    .tabs .expand { margin-left: auto; width: 25px; }
    .nav { height: 37px; padding: 0 11px; }
    .nav > button { width: 12px; height: 20px; }
    .nav .b2 { margin-left: 15px; }
    .nav .b3 { margin-left: 9px; }
    .nav .b4 { margin-left: 6px; margin-right: 6px; }
    .address { flex: 1; height: 27px; border: 1px solid #d9d9d9; padding-left: 2px; gap: 5px; }
    .address .crumb { padding: 0 2px; height: 25px; }
    .address .drop { margin-left: auto; width: 26px; height: 25px; margin-right: -5px; }
    .address .refresh { width: 27px; height: 25px; border-left: 1px solid #d9d9d9; }
    .search { width: 182px; height: 27px; margin-left: 10px; border: 1px solid #d9d9d9; padding-right: 7px; }
    .search input { flex: 1; min-width: 0; }
    .body { flex: 1; display: grid; grid-template-columns: 143px 1fr; }
    .side { padding-top: 14px; border-right: 1px solid #f0f0f0; }
    .main { padding: 6px 6px 0; }
    .status { height: 22px; padding: 0 7px 0 13px; gap: 6px; color: #1e395b; }
    .status i { width: 1px; height: 11px; background: #e8e8e8; }
    .status .first { margin-left: auto; }
  </style>
  <div class="title">
    <ui-icon name="pc"></ui-icon><i></i>
    <ui-icon name="props"></ui-icon>
    <ui-icon name="newFolder"></ui-icon>
    <ui-icon name="custom"></ui-icon><i></i>
    <span>This PC</span>
    <div class="window">
      ${iconButton('exMin', 'Minimize')}
      ${iconButton('exMax', 'Restore')}
      ${iconButton('exClose', 'Close')}
    </div>
  </div>
  <div class="tabs">
    <button class="file" type="button">File</button>
    <button class="tab" type="button">Computer</button>
    <button class="tab" type="button">View</button>
    <button class="expand" type="button" aria-label="Expand ribbon"><ui-icon name="chevSoft"></ui-icon></button>
    ${iconButton('help', 'Help')}
  </div>
  <div class="nav">
    <button type="button" aria-label="Back"><ui-icon name="exBack"></ui-icon></button>
    <button class="b2" type="button" aria-label="Forward"><ui-icon name="exFwd"></ui-icon></button>
    <button class="b3" type="button" aria-label="Recent"><ui-icon name="chevSmall"></ui-icon></button>
    <button class="b4" type="button" aria-label="Up"><ui-icon name="exUp"></ui-icon></button>
    <div class="address">
      <ui-icon name="pc"></ui-icon>
      <ui-icon name="crumb"></ui-icon>
      <button class="crumb" type="button">This PC</button>
      <button class="drop" type="button" aria-label="Previous locations"><ui-icon name="chevDown"></ui-icon></button>
      <button class="refresh" type="button" aria-label="Refresh"><ui-icon name="exReload"></ui-icon></button>
    </div>
    <div class="search">
      <input type="text" aria-label="Search This PC"><ui-icon name="exSearch"></ui-icon>
    </div>
  </div>
  <div class="body">
    <nav class="side"><slot name="nav"></slot></nav>
    <div class="main"><slot></slot></div>
  </div>
  <div class="status">
    <span>11 items</span><i></i>
    <button class="first" type="button" aria-label="Details view"><ui-icon name="viewList"></ui-icon></button>
    ${iconButton('viewTiles', 'Tiles view')}
  </div>
`);

define('nav-item', el => {
  const child = el.hasAttribute('child');
  const arrow = child ? '' : `<ui-icon name="${el.hasAttribute('open') ? 'chevDown' : 'chevRight'}"></ui-icon>`;
  return `
    <style>
      :host { display: block; margin-right: 1px; }
      :host([spaced]) { margin-top: 6px; }
      :host([selected]) { background: #cce8ff; }
      a {
        display: grid; grid-template-columns: 16px 15px 1fr 16px; align-items: center; justify-items: center;
        column-gap: 4px; height: 22px; padding-left: 1px; color: inherit; text-decoration: none;
      }
      :host([child]) a { padding-left: 9px; }
      .text { justify-self: start; white-space: nowrap; }
    </style>
    <a href="#"><span>${arrow}</span><ui-icon name="${el.getAttribute('icon')}"></ui-icon>
      <span class="text"><slot></slot></span>${child ? '<ui-icon name="pin"></ui-icon>' : ''}</a>`;
});

define('item-group', el => `
  <style>
    :host { display: block; }
    h2 {
      display: flex; align-items: center; gap: 4px; height: 24px; margin: 0 0 2px;
      font-size: 13px; font-weight: normal; color: #1e3287; white-space: nowrap;
    }
    h2::after { content: ""; flex: 1; height: 1px; margin-left: 2px; background: #e2e2e2; }
    .tiles { display: grid; grid-template-columns: repeat(auto-fill, 228px); grid-auto-rows: 50px; padding-left: 14px; }
  </style>
  <h2><ui-icon name="chevWide"></ui-icon>${el.getAttribute('label')}</h2>
  <div class="tiles"><slot></slot></div>
`);

define('item-tile', el => {
  const free = el.getAttribute('free');
  return `
    <style>
      :host { display: flex; gap: 4px; position: relative; line-height: 16px; }
      ui-icon { padding-top: 5px; }
      .text { padding-top: 7px; }
      .text.drive { padding-top: 0; }
      small { display: block; font-size: 10px; color: #6d6d6d; }
      progress {
        display: block; width: 170px; height: 12px; box-sizing: border-box;
        appearance: none; border: 1px solid #bcbcbc; background: #e6e6e6;
      }
      progress::-webkit-progress-bar { background: #e6e6e6; }
      progress::-webkit-progress-value { background: #26a0da; }
      /* red callout drawn around one drive */
      :host([marked])::after {
        content: ""; position: absolute; inset: -5px 2px -5px -18px; border: 3px solid #fe0000;
      }
    </style>
    <ui-icon name="${el.getAttribute('icon')}"></ui-icon>
    <div class="text${free ? ' drive' : ''}"><slot></slot>
      ${free ? `<progress max="100" value="${el.getAttribute('used')}" aria-label="Used space"></progress><small>${free}</small>` : ''}
    </div>`;
});

define('task-bar', () => `
  <style>
    ${RESET}
    :host {
      display: flex; align-items: center; height: 36px; color: #fff;
      background: linear-gradient(to right, #011a25, #00101f 60%, #000518);
    }
    button { height: 36px; }
    .start { width: 43px; }
    label {
      display: flex; align-items: center; gap: 10px; flex: 0 1 288px; height: 36px; padding: 0 9px;
      background: #f2f2f2; border: 1px solid #b9bcbe; color: #3a3a3a; font-size: 13px;
    }
    input { flex: 1; min-width: 0; }
    input::placeholder { color: #3a3a3a; opacity: 1; }
    .apps { display: flex; gap: 1px; }
    .apps button { width: 43px; border-bottom: 3px solid transparent; border-top: 3px solid transparent; }
    .apps .open { background: #34454f; border-color: #34454f #34454f #76b9ed; }
    .apps .running { width: 36px; margin-left: 4px; border-bottom-color: #76b9ed; }
    .tray { margin-left: auto; display: flex; align-items: center; }
    .tray button { width: 22px; }
    .tray .clock { width: 56px; flex-direction: column; line-height: 16px; }
    .tray .notify { position: relative; width: 44px; }
    .badge {
      position: absolute; left: 21px; top: 17px; width: 15px; height: 15px; box-sizing: border-box;
      border: 1px solid #8a8f96; border-radius: 8px; background: #23282f; line-height: 13px;
    }
    .tray i { width: 1px; height: 36px; margin-right: 4px; background: #4a5160; }
  </style>
  <button class="start" type="button" aria-label="Start"><ui-icon name="windows"></ui-icon></button>
  <label><ui-icon name="taskSearch"></ui-icon><input type="text" aria-label="Search" placeholder="Type here to search"></label>
  <div class="apps">
    ${iconButton('taskView', 'Task view')}
    ${iconButton('edge', 'Edge')}
    <button class="open" type="button" aria-label="File Explorer"><ui-icon name="explorer"></ui-icon></button>
    <button class="running" type="button" aria-label="Server Manager"><ui-icon name="server"></ui-icon></button>
  </div>
  <div class="tray">
    ${iconButton('trayUp', 'Show hidden icons')}
    ${iconButton('globe', 'Network')}
    ${iconButton('mute', 'Volume')}
    <button class="clock" type="button"><span>4:43 PM</span><span>4/8/2026</span></button>
    <button class="notify" type="button" aria-label="Notifications"><ui-icon name="notify"></ui-icon><span class="badge">1</span></button>
    <i></i>
  </div>
`);
</script>
</body>
</html>
